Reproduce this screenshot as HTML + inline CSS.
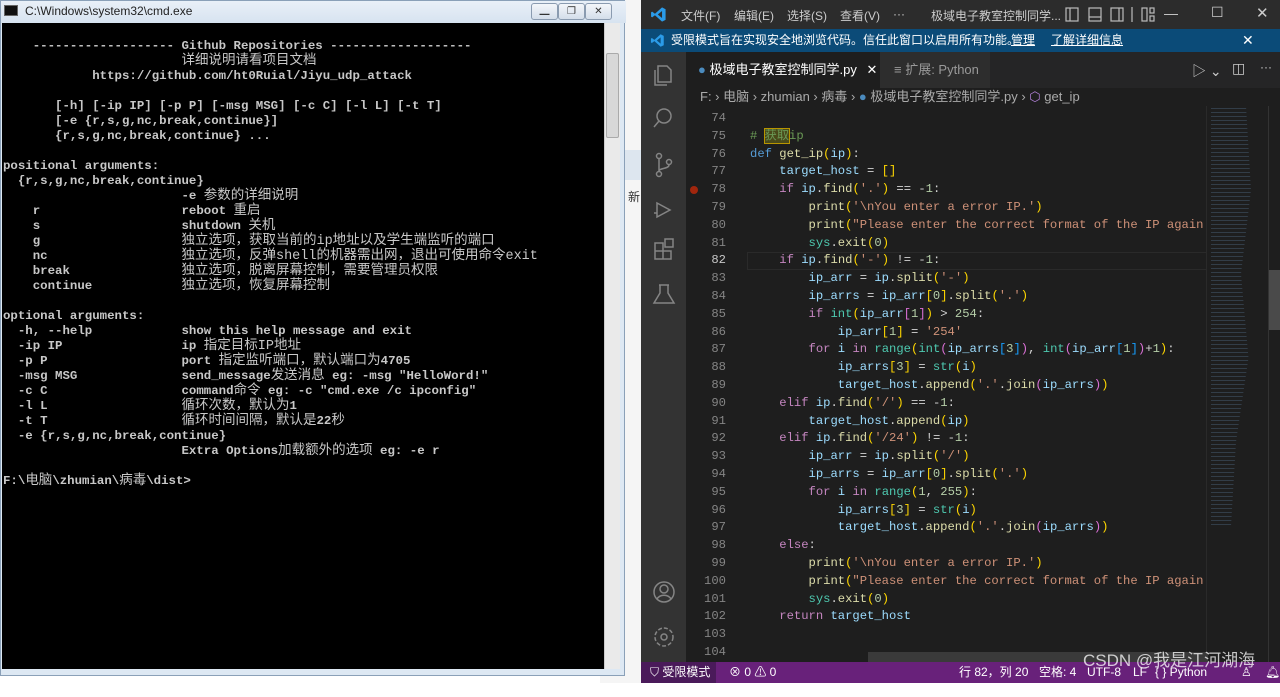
<!DOCTYPE html>
<html><head><meta charset="utf-8"><style>
*{margin:0;padding:0;box-sizing:border-box}
body{width:1280px;height:683px;overflow:hidden;background:#fff;position:relative;font-family:"Liberation Sans","Noto Sans CJK SC",sans-serif}
.abs{position:absolute}
#bg{left:600px;top:0;width:45px;height:683px;background:#f5f5f5}
#cmd{left:0;top:0;width:625px;height:676px;background:#dde8f3;border:1px solid #8aa0b8}
#cmdtitle{left:0;top:0;width:625px;height:22px;background:linear-gradient(#e9f0f8,#d7e3f0);font-size:12px;color:#222}
#con{left:1px;top:22px;width:602px;height:646px;background:#000;overflow:hidden}
#con pre{position:absolute;left:1px;top:16px;font-family:"Liberation Mono","Noto Sans CJK SC",monospace;font-size:12.4px;line-height:15px;color:#c8c8c8;font-weight:bold;white-space:pre}
#con pre span{font-weight:normal;font-size:13.5px;line-height:15px}
#sb{left:603px;top:22px;width:16px;height:646px;background:#eaeaea;border-left:1px solid #ccc}
.wb{top:2px;height:17px;border:1px solid #8a9bb0;border-radius:3px;background:linear-gradient(#f3f6fa,#d4deea);font-size:10px;text-align:center;line-height:15px;color:#333}
#vs{left:641px;top:0;width:639px;height:683px;background:#1e1e1e;color:#ccc;font-size:12px}
#vt{left:0;top:0;width:639px;height:29px;background:#2c2c2c}
#ban{left:0;top:29px;width:639px;height:23px;background:#0b4b78;color:#fff;font-size:12px;line-height:23px;z-index:2}
#tabs{left:45px;top:52px;width:594px;height:36px;background:#252526}
#act{left:0;top:52px;width:45px;height:610px;background:#333}
#crumb{left:45px;top:88px;width:594px;height:18px;color:#aaa;font-size:13px;line-height:18px}
#status{left:0;top:662px;width:639px;height:21px;background:#68217a;color:#fff;font-size:12px;line-height:21px}
#code{left:45px;top:110px;font-family:"Liberation Mono","Noto Sans CJK SC",monospace;font-size:12.2px;line-height:17.8px;white-space:pre;color:#d4d4d4}
.ln{position:absolute;left:0;width:40px;text-align:right;color:#858585}
.cl{position:absolute;left:64px}
.k{color:#c586c0}.d{color:#569cd6}.f{color:#dcdcaa}.v{color:#9cdcfe}.s{color:#ce9178}.n{color:#b5cea8}.y{color:#ffd700}.p{color:#da70d6}.b{color:#179fff}.t{color:#4ec9b0}.c{color:#6a9955}
</style></head><body>
<div id="bg" class="abs"></div>
<div class="abs" style="left:625px;top:150px;width:16px;height:30px;background:#dde6ef"></div>
<div class="abs" style="left:628px;top:188px;color:#333;font-size:12px">新</div>
<div id="cmd" class="abs">
 <div id="cmdtitle" class="abs"><span class="abs" style="left:3px;top:4px;width:14px;height:11px;background:#111;border:1px solid #666"></span><span class="abs" style="left:24px;top:3px">C:\Windows\system32\cmd.exe</span>
 <div class="abs wb" style="left:530px;width:27px">▁</div><div class="abs wb" style="left:557px;width:27px">❐</div><div class="abs wb" style="left:584px;width:27px">✕</div></div>
 <div id="con" class="abs"><pre>    ------------------- Github Repositories -------------------
                        <span>详细说明请看项目文档</span>
            https://github.com/ht0Ruial/Jiyu_udp_attack

       [-h] [-ip IP] [-p P] [-msg MSG] [-c C] [-l L] [-t T]
       [-e {r,s,g,nc,break,continue}]
       {r,s,g,nc,break,continue} ...

positional arguments:
  {r,s,g,nc,break,continue}
                        -e <span>参数的详细说明</span>
    r                   reboot <span>重启</span>
    s                   shutdown <span>关机</span>
    g                   <span>独立选项，获取当前的ip地址以及学生端监听的端口</span>
    nc                  <span>独立选项，反弹shell的机器需出网，退出可使用命令exit</span>
    break               <span>独立选项，脱离屏幕控制，需要管理员权限</span>
    continue            <span>独立选项，恢复屏幕控制</span>

optional arguments:
  -h, --help            show this help message and exit
  -ip IP                ip <span>指定目标IP地址</span>
  -p P                  port <span>指定监听端口，默认端口为</span>4705
  -msg MSG              send_message<span>发送消息</span> eg: -msg "HelloWord!"
  -c C                  command<span>命令</span> eg: -c "cmd.exe /c ipconfig"
  -l L                  <span>循环次数，默认为</span>1
  -t T                  <span>循环时间间隔，默认是</span>22<span>秒</span>
  -e {r,s,g,nc,break,continue}
                        Extra Options<span>加载额外的选项</span> eg: -e r

F:\<span>电脑</span>\zhumian\<span>病毒</span>\dist&gt;</pre></div>
 <div id="sb" class="abs"><div class="abs" style="left:1px;top:30px;width:13px;height:85px;background:#d8d8d8;border:1px solid #aaa;border-radius:2px"></div></div>
</div>
<div id="vs" class="abs">
 <div id="vt" class="abs">
  <svg class="abs" style="left:9px;top:6px" width="17" height="17" viewBox="0 0 24 24"><path d="M17 2 L22 4.5 V19.5 L17 22 L7 13 L3 16 L1.5 15 V9 L3 8 L7 11 Z M17 7 L11 12 L17 17 Z" fill="#2b9be8"/></svg>
  <span class="abs" style="left:40px;top:7px;color:#ccc">文件(F)</span><span class="abs" style="left:93px;top:7px">编辑(E)</span><span class="abs" style="left:146px;top:7px">选择(S)</span><span class="abs" style="left:199px;top:7px">查看(V)</span><span class="abs" style="left:252px;top:7px">···</span>
  <span class="abs" style="left:290px;top:7px">极域电子教室控制同学...</span>
  <svg class="abs" style="left:424px;top:7px" width="110" height="15" viewBox="0 0 110 15" fill="none" stroke="#bbb" stroke-width="1.2"><rect x="1" y="1" width="12" height="13"/><path d="M5 1v13"/><rect x="24" y="1" width="12" height="13"/><path d="M24 10h12"/><rect x="46" y="1" width="12" height="13"/><path d="M54 1v13"/><path d="M67 0v15"/><rect x="77" y="1" width="5" height="13"/><rect x="85" y="1" width="4" height="5"/><rect x="85" y="9" width="4" height="5"/></svg>
  <span class="abs" style="left:523px;top:5px;font-size:14px">—</span><span class="abs" style="left:570px;top:4px;font-size:14px">☐</span><span class="abs" style="left:615px;top:4px;font-size:15px">✕</span>
 </div>
 <div id="ban" class="abs"><svg class="abs" style="left:9px;top:4px" width="15" height="15" viewBox="0 0 24 24"><path d="M17 2 L22 4.5 V19.5 L17 22 L7 13 L3 16 L1.5 15 V9 L3 8 L7 11 Z M17 7 L11 12 L17 17 Z" fill="#2b9be8"/></svg>
  <span class="abs" style="left:30px">受限模式旨在实现安全地浏览代码。信任此窗口以启用所有功能。</span><span class="abs" style="left:370px;text-decoration:underline">管理</span><span class="abs" style="left:410px;text-decoration:underline">了解详细信息</span><span class="abs" style="left:601px;font-size:14px">✕</span></div>
 <div id="act" class="abs">
  <svg class="abs" style="left:11px;top:11px" width="24" height="300" viewBox="0 0 24 300" fill="none" stroke="#858585" stroke-width="1.5">
   <path d="M6 3h9l4 4v12H6z M3 7v15h12"/>
   <circle cx="12" cy="53" r="7"/><path d="M7 58 L2 64"/>
   <circle cx="7" cy="93" r="2.5"/><circle cx="7" cy="111" r="2.5"/><circle cx="17" cy="99" r="2.5"/><path d="M7 96v12 M17 102c0 4-10 3-10 6"/>
   <path d="M5 140l13 7-13 7z M2 150h3"/>
   <path d="M3 180h8v8H3z M3 188h8v8H3z M11 188h8v8h-8z M13 176h8v8h-8z"/>
   <path d="M8 222v8l-6 10h20l-6-10v-8 M7 222h10"/>
  </svg>
  <svg class="abs" style="left:11px;top:528px" width="24" height="70" viewBox="0 0 24 70" fill="none" stroke="#858585" stroke-width="1.5"><circle cx="12" cy="12" r="10"/><circle cx="12" cy="9" r="4"/><path d="M5 19c3-5 11-5 14 0"/><circle cx="12" cy="57" r="3"/><circle cx="12" cy="57" r="9" stroke-dasharray="4 2"/></svg>
 </div>
 <div id="tabs" class="abs">
  <div class="abs" style="left:0;top:0;width:194px;height:36px;background:#1e1e1e;color:#fff;font-size:13px;line-height:36px"><span style="color:#4b8bbe;margin-left:12px">●</span> 极域电子教室控制同学.py <span style="margin-left:6px">✕</span></div>
  <div class="abs" style="left:194px;top:0;width:110px;height:36px;background:#2d2d2d;color:#999;font-size:13px;line-height:36px"><span style="margin-left:14px">≡ 扩展: Python</span></div>
  <span class="abs" style="left:506px;top:9px;font-size:14px">▷ ⌄</span><span class="abs" style="left:546px;top:8px;font-size:14px">◫</span><span class="abs" style="left:574px;top:8px">···</span>
 </div>
 <div id="crumb" class="abs"><span style="margin-left:14px">F: › 电脑 › zhumian › 病毒 › <span style="color:#4b8bbe">●</span> 极域电子教室控制同学.py › <span style="color:#b180d7">⬡</span> get_ip</span></div>
 <div class="abs" style="left:106px;top:252px;width:460px;height:18px;border:1px solid #2a2a2a"></div>
 <div class="abs" style="left:49px;top:186px;width:8px;height:8px;border-radius:50%;background:#a1260d"></div>
 <div id="code" class="abs">
<div class="ln" style="top:0">74</div>
<div class="ln" style="top:17.8px">75</div><div class="cl" style="top:17.8px"><span class="c"># <span style="outline:1px solid #b89500;background:#4a4a1a">获取</span>ip</span></div>
<div class="ln" style="top:35.6px">76</div><div class="cl" style="top:35.6px"><span class="d">def</span> <span class="f">get_ip</span><span class="y">(</span><span class="v">ip</span><span class="y">)</span>:</div>
<div class="ln" style="top:53.4px">77</div><div class="cl" style="top:53.4px">    <span class="v">target_host</span> = <span class="y">[]</span></div>
<div class="ln" style="top:71.2px">78</div><div class="cl" style="top:71.2px">    <span class="k">if</span> <span class="v">ip</span>.<span class="f">find</span><span class="y">(</span><span class="s">'.'</span><span class="y">)</span> == -<span class="n">1</span>:</div>
<div class="ln" style="top:89px">79</div><div class="cl" style="top:89px">        <span class="f">print</span><span class="y">(</span><span class="s">'\nYou enter a error IP.'</span><span class="y">)</span></div>
<div class="ln" style="top:106.8px">80</div><div class="cl" style="top:106.8px">        <span class="f">print</span><span class="y">(</span><span class="s">"Please enter the correct format of the IP again."</span></div>
<div class="ln" style="top:124.6px">81</div><div class="cl" style="top:124.6px">        <span class="t">sys</span>.<span class="f">exit</span><span class="y">(</span><span class="n">0</span><span class="y">)</span></div>
<div class="ln" style="top:142.4px;color:#c6c6c6">82</div><div class="cl" style="top:142.4px">    <span class="k">if</span> <span class="v">ip</span>.<span class="f">find</span><span class="y">(</span><span class="s">'-'</span><span class="y">)</span> != -<span class="n">1</span>:</div>
<div class="ln" style="top:160.2px">83</div><div class="cl" style="top:160.2px">        <span class="v">ip_arr</span> = <span class="v">ip</span>.<span class="f">split</span><span class="y">(</span><span class="s">'-'</span><span class="y">)</span></div>
<div class="ln" style="top:178px">84</div><div class="cl" style="top:178px">        <span class="v">ip_arrs</span> = <span class="v">ip_arr</span><span class="y">[</span><span class="n">0</span><span class="y">]</span>.<span class="f">split</span><span class="y">(</span><span class="s">'.'</span><span class="y">)</span></div>
<div class="ln" style="top:195.8px">85</div><div class="cl" style="top:195.8px">        <span class="k">if</span> <span class="t">int</span><span class="y">(</span><span class="v">ip_arr</span><span class="p">[</span><span class="n">1</span><span class="p">]</span><span class="y">)</span> &gt; <span class="n">254</span>:</div>
<div class="ln" style="top:213.6px">86</div><div class="cl" style="top:213.6px">            <span class="v">ip_arr</span><span class="y">[</span><span class="n">1</span><span class="y">]</span> = <span class="s">'254'</span></div>
<div class="ln" style="top:231.4px">87</div><div class="cl" style="top:231.4px">        <span class="k">for</span> <span class="v">i</span> <span class="k">in</span> <span class="t">range</span><span class="y">(</span><span class="t">int</span><span class="p">(</span><span class="v">ip_arrs</span><span class="b">[</span><span class="n">3</span><span class="b">]</span><span class="p">)</span>, <span class="t">int</span><span class="p">(</span><span class="v">ip_arr</span><span class="b">[</span><span class="n">1</span><span class="b">]</span><span class="p">)</span>+<span class="n">1</span><span class="y">)</span>:</div>
<div class="ln" style="top:249.2px">88</div><div class="cl" style="top:249.2px">            <span class="v">ip_arrs</span><span class="y">[</span><span class="n">3</span><span class="y">]</span> = <span class="t">str</span><span class="y">(</span><span class="v">i</span><span class="y">)</span></div>
<div class="ln" style="top:267px">89</div><div class="cl" style="top:267px">            <span class="v">target_host</span>.<span class="f">append</span><span class="y">(</span><span class="s">'.'</span>.<span class="f">join</span><span class="p">(</span><span class="v">ip_arrs</span><span class="p">)</span><span class="y">)</span></div>
<div class="ln" style="top:284.8px">90</div><div class="cl" style="top:284.8px">    <span class="k">elif</span> <span class="v">ip</span>.<span class="f">find</span><span class="y">(</span><span class="s">'/'</span><span class="y">)</span> == -<span class="n">1</span>:</div>
<div class="ln" style="top:302.6px">91</div><div class="cl" style="top:302.6px">        <span class="v">target_host</span>.<span class="f">append</span><span class="y">(</span><span class="v">ip</span><span class="y">)</span></div>
<div class="ln" style="top:320.4px">92</div><div class="cl" style="top:320.4px">    <span class="k">elif</span> <span class="v">ip</span>.<span class="f">find</span><span class="y">(</span><span class="s">'/24'</span><span class="y">)</span> != -<span class="n">1</span>:</div>
<div class="ln" style="top:338.2px">93</div><div class="cl" style="top:338.2px">        <span class="v">ip_arr</span> = <span class="v">ip</span>.<span class="f">split</span><span class="y">(</span><span class="s">'/'</span><span class="y">)</span></div>
<div class="ln" style="top:356px">94</div><div class="cl" style="top:356px">        <span class="v">ip_arrs</span> = <span class="v">ip_arr</span><span class="y">[</span><span class="n">0</span><span class="y">]</span>.<span class="f">split</span><span class="y">(</span><span class="s">'.'</span><span class="y">)</span></div>
<div class="ln" style="top:373.8px">95</div><div class="cl" style="top:373.8px">        <span class="k">for</span> <span class="v">i</span> <span class="k">in</span> <span class="t">range</span><span class="y">(</span><span class="n">1</span>, <span class="n">255</span><span class="y">)</span>:</div>
<div class="ln" style="top:391.6px">96</div><div class="cl" style="top:391.6px">            <span class="v">ip_arrs</span><span class="y">[</span><span class="n">3</span><span class="y">]</span> = <span class="t">str</span><span class="y">(</span><span class="v">i</span><span class="y">)</span></div>
<div class="ln" style="top:409.4px">97</div><div class="cl" style="top:409.4px">            <span class="v">target_host</span>.<span class="f">append</span><span class="y">(</span><span class="s">'.'</span>.<span class="f">join</span><span class="p">(</span><span class="v">ip_arrs</span><span class="p">)</span><span class="y">)</span></div>
<div class="ln" style="top:427.2px">98</div><div class="cl" style="top:427.2px">    <span class="k">else</span>:</div>
<div class="ln" style="top:445px">99</div><div class="cl" style="top:445px">        <span class="f">print</span><span class="y">(</span><span class="s">'\nYou enter a error IP.'</span><span class="y">)</span></div>
<div class="ln" style="top:462.8px">100</div><div class="cl" style="top:462.8px">        <span class="f">print</span><span class="y">(</span><span class="s">"Please enter the correct format of the IP again."</span></div>
<div class="ln" style="top:480.6px">101</div><div class="cl" style="top:480.6px">        <span class="t">sys</span>.<span class="f">exit</span><span class="y">(</span><span class="n">0</span><span class="y">)</span></div>
<div class="ln" style="top:498.4px">102</div><div class="cl" style="top:498.4px">    <span class="k">return</span> <span class="v">target_host</span></div>
<div class="ln" style="top:516.2px">103</div>
<div class="ln" style="top:534px">104</div>
 </div>
 <div class="abs" style="left:565px;top:106px;width:62px;height:556px;background:#1e1e1e;border-left:1px solid #2a2a2a"></div>
 <div class="abs" style="left:570px;top:106px;width:50px;height:420px;background:repeating-linear-gradient(#1e1e1e 0 2px,#3a4a5a 2px 3px,#1e1e1e 3px 4px);opacity:.7;clip-path:polygon(0 0,70% 0,80% 20%,60% 40%,75% 60%,50% 80%,40% 100%,0 100%)"></div>
 <div class="abs" style="left:627px;top:106px;width:12px;height:556px;background:#1e1e1e;border-left:1px solid #333"></div>
 <div class="abs" style="left:628px;top:270px;width:11px;height:60px;background:#4a4a4a"></div>
 <div class="abs" style="left:227px;top:652px;width:340px;height:10px;background:#3a3a3a"></div>
 <div id="status" class="abs"><span class="abs" style="left:0;width:75px;height:21px;background:#4a1a5a"></span><span class="abs" style="left:9px">⛉ 受限模式</span><span class="abs" style="left:88px">⊗ 0 ⚠ 0</span><span class="abs" style="left:318px">行 82，列 20</span><span class="abs" style="left:398px">空格: 4</span><span class="abs" style="left:446px">UTF-8</span><span class="abs" style="left:492px">LF</span><span class="abs" style="left:514px">{ } Python</span><span class="abs" style="left:600px">♙</span><span class="abs" style="left:624px">🔔︎</span>
 <span class="abs" style="left:442px;top:-12px;font-size:17px;color:rgba(255,255,255,.75)">CSDN @我是江河湖海</span></div>
</div>
</body></html>
